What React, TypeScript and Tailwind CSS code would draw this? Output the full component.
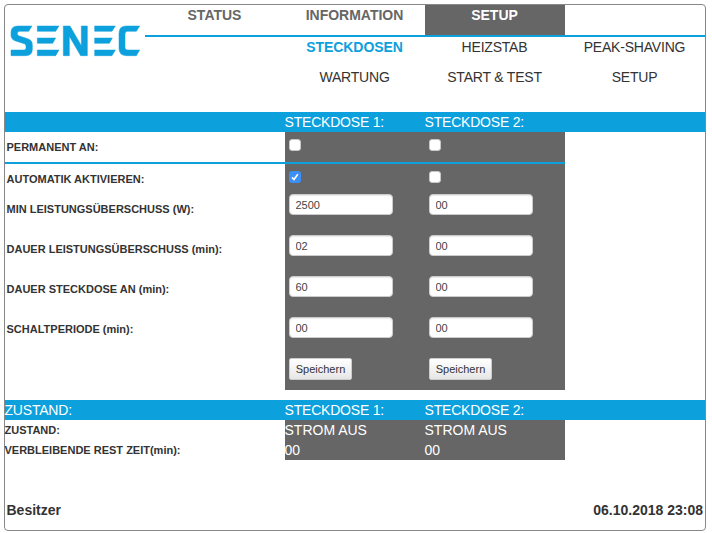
import React from "react";

function Logo() {
  return (
    <svg
      viewBox="0 0 390 90"
      className="block h-[30px] w-[130px] overflow-visible fill-[#0ca0dd] stroke-[#0ca0dd] stroke-[1.5]"
      role="img"
      aria-label="SENEC"
    >
      <path d="M63 0H20Q0 0 0 20V28Q0 40 14 45L40 53Q45 55 45 60V66Q45 72 39 72H0V89H44Q64 89 64 70V56Q64 43 50 38L25 30Q19 28 19 24V22Q19 16 26 16H53Z" />
      <path d="M79 0H144L134 16H79ZM79 36H134L125 52H79ZM79 72H144L134 89H79Z" />
      <path d="M157 0H177L211 59V0H229V89H209L175 31V89H157Z" />
      <path d="M251 0H313L303 16H251ZM251 36H304L295 52H251ZM251 72H313L303 89H251Z" />
      <path d="M386 0H346Q324 0 324 22V67Q324 89 346 89H376L386 72H350Q342 72 342 64V24Q342 16 350 16H376Z" />
    </svg>
  );
}

function Check({ checked = false, label }: { checked?: boolean; label: string }) {
  return (
    <span
      role="checkbox"
      aria-checked={checked}
      aria-label={label}
      className={
        checked
          ? "flex size-3 items-center justify-center rounded-[3px] bg-[#3b8ff5]"
          : "flex size-3 rounded-[3px] border border-[#c8c8c8] bg-white"
      }
    >
      {checked && (
        <svg viewBox="0 0 12 12" className="size-3 fill-none stroke-white stroke-[1.7]">
          <path d="M3 6.4L5 8.5L8.8 3.2" />
        </svg>
      )}
    </span>
  );
}

const fields = [
  { label: "MIN LEISTUNGSÜBERSCHUSS (W):", values: ["2500", "00"] },
  { label: "DAUER LEISTUNGSÜBERSCHUSS (min):", values: ["02", "00"] },
  { label: "DAUER STECKDOSE AN (min):", values: ["60", "00"] },
  { label: "SCHALTPERIODE (min):", values: ["00", "00"] },
];

function SocketColumn({ index }: { index: number }) {
  return (
    <div className="flex w-[140px] flex-col items-start pt-[7px] pl-1">
      <Check checked={index === 0} label="Automatik aktivieren" />
      <div className="mt-[11px] flex flex-col gap-5">
        {fields.map((f) => (
          <input
            key={f.label}
            aria-label={f.label}
            defaultValue={f.values[index]}
            className="block h-[21px] w-[104px] rounded-[4px] border border-[#ccc] bg-white px-[5.5px] text-[11px] leading-[19px] text-[#444] shadow-[inset_0_1px_1px_rgba(0,0,0,0.08)]"
          />
        ))}
      </div>
      <button className="mt-5 h-[22px] w-[63px] rounded-[2px] border border-[#ccc] bg-linear-to-b from-white to-[#e6e6e6] text-center text-[11px] leading-5 text-[#333]">
        Speichern
      </button>
    </div>
  );
}

function Bar({ title }: { title?: string }) {
  return (
    <div className="flex h-5 bg-[#0ca0dd] leading-5 tracking-[-0.2px] text-white">
      <div className="-ml-[0.5px] w-[280px]">{title}</div>
      <div className="w-[140px]">STECKDOSE 1:</div>
      <div className="w-[140px]">STECKDOSE 2:</div>
    </div>
  );
}

const states = [
  { label: "ZUSTAND:", value: "STROM AUS" },
  { label: "VERBLEIBENDE REST ZEIT(min):", value: "00" },
];

export default function App() {
  return (
    <div className="h-[533px] w-[712px] bg-white pt-1 pl-1 font-['Liberation_Sans',Arial,sans-serif] text-[14px] leading-5 text-[#333]">
      <div className="flex h-[527px] w-[702px] flex-col rounded-[4px] border border-[#888] bg-white">
        <header className="flex h-[107px] shrink-0">
          <div className="w-[140px] pt-[21px] pl-[5.5px]">
            <Logo />
          </div>
          <div className="w-[560px]">
            <nav className="grid h-8 grid-cols-4 border-b-2 border-[#0ca0dd] text-center font-bold text-[#666]">
              <a className="pr-px">STATUS</a>
              <a className="pr-px">INFORMATION</a>
              <a className="bg-[#666] pr-px text-white">SETUP</a>
            </nav>
            <nav className="grid grid-cols-4 gap-y-2.5 text-center tracking-[-0.2px]">
              <a className="col-start-2 pr-px font-bold tracking-[-0.05px] text-[#0ca0dd]">STECKDOSEN</a>
              <a className="pr-px">HEIZSTAB</a>
              <a className="pr-px">PEAK-SHAVING</a>
              <a className="col-start-2 pr-px">WARTUNG</a>
              <a className="pr-px">START &amp; TEST</a>
              <a className="pr-px">SETUP</a>
            </nav>
          </div>
        </header>

        <Bar />
        <div className="flex h-8 w-[560px] border-b-2 border-[#0ca0dd]">
          <div className="w-[280px] pt-[5px] pl-[1.5px] text-[11px] font-bold">PERMANENT AN:</div>
          <div className="flex w-[280px] bg-[#666] pt-[7px] pl-1">
            <div className="w-[140px]"><Check label="Permanent an 1" /></div>
            <Check label="Permanent an 2" />
          </div>
        </div>
        <div className="flex h-[226px] w-[560px]">
          <div className="flex w-[280px] flex-col pt-[5px] pl-[1.5px] text-[11px] font-bold">
            <div className="h-[30px]">AUTOMATIK AKTIVIEREN:</div>
            {fields.map((f) => (
              <div key={f.label} className="h-10">{f.label}</div>
            ))}
          </div>
          <div className="flex w-[280px] bg-[#666]">
            <SocketColumn index={0} />
            <SocketColumn index={1} />
          </div>
        </div>

        <div className="mt-2.5">
          <Bar title="ZUSTAND:" />
        </div>
        {states.map((s) => (
          <div key={s.label} className="flex h-5">
            <div className="-ml-[0.5px] w-[280.5px] text-[11px] font-bold">{s.label}</div>
            <div className="flex w-[280px] bg-[#666] text-white">
              <div className="-ml-[0.5px] w-[140px]">{s.value}</div>
              <div className="w-[140px]">{s.value}</div>
            </div>
          </div>
        ))}
        <footer className="mt-10 flex justify-between pr-[2px] pl-[1.5px] font-bold">
          <span>Besitzer</span>
          <span>06.10.2018 23:08</span>
        </footer>
      </div>
    </div>
  );
}
